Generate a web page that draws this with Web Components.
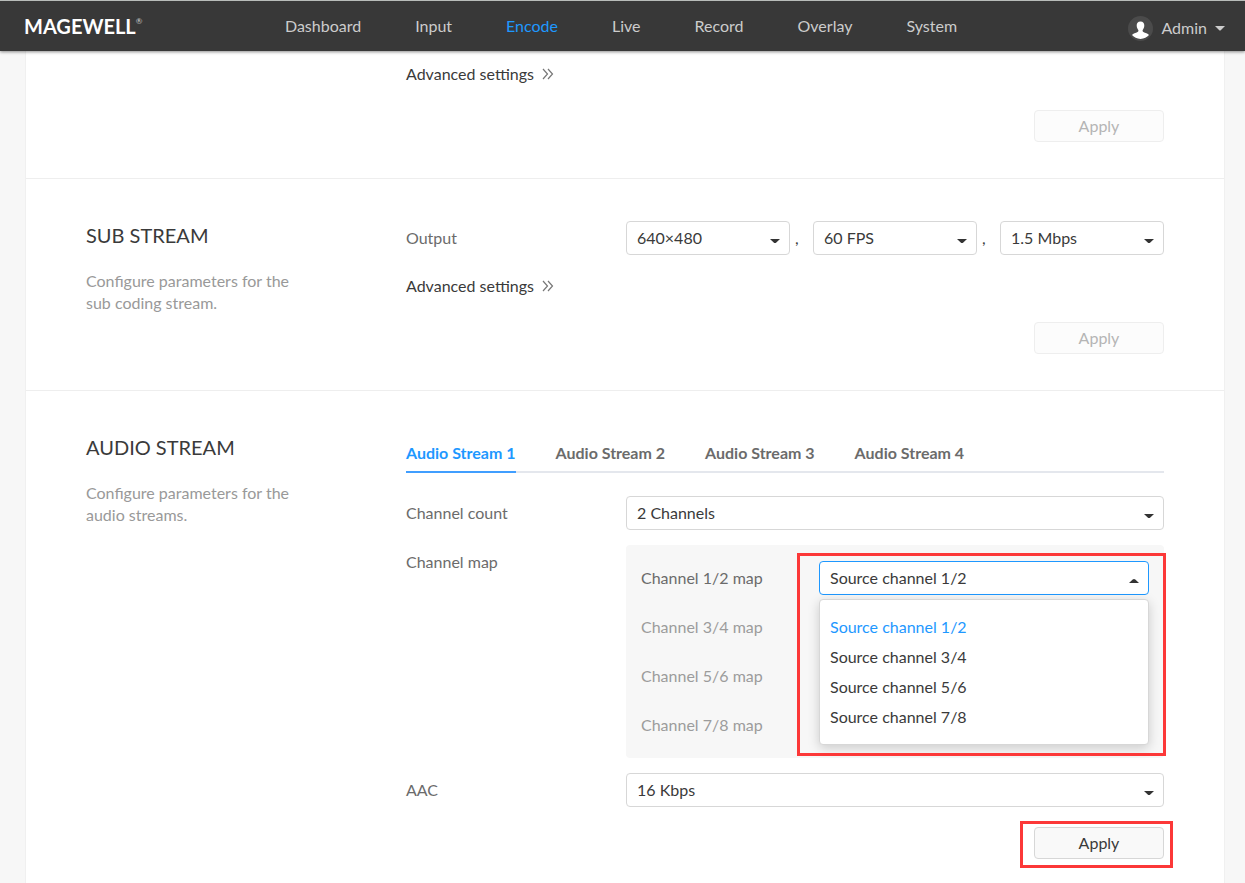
<!DOCTYPE html>
<html lang="en">
<head>
<meta charset="utf-8">
<title>Magewell - Encode</title>
<style>
  body { margin: 0; background: #f7f7f7; font: 16px/22px Lato, Carlito, "Liberation Sans", sans-serif; color: #3a3a3a; }
</style>
</head>
<body>
<mw-app></mw-app>

<script>
const define = (name, html, setup) => {
  const template = document.createElement('template');
  template.innerHTML = html;
  customElements.define(name, class extends HTMLElement {
    constructor() {
      super();
      this.attachShadow({ mode: 'open' }).append(template.content.cloneNode(true));
    }
    connectedCallback() {
      if (setup && !this.ready) { this.ready = true; setup(this, this.shadowRoot); }
    }
  });
};

define('mw-header', `
<style>
  :host { display: grid; grid-template-columns: 1fr auto 1fr; align-items: center; box-sizing: border-box; height: 51px; padding: 0 20px 0 17px;
    background: #383838; border-top: 1px solid #b8bcb9; box-shadow: 0 1px 3px rgba(0,0,0,.45); color: #ccc; position: sticky; top: 0; z-index: 5; }
  a { color: inherit; text-decoration: none; }
  .logo { justify-self: start; margin-left: 7px; display: flex; color: #fff; font: 700 20px/22px Lato, sans-serif; }
  sup { font: 400 8px/12px Lato, sans-serif; color: #ccc; }
  nav { display: flex; gap: 54px; }
  nav a[aria-current] { color: #1e98ff; }
  button { justify-self: end; display: flex; align-items: center; padding: 4px 0 0; border: 0; background: none; color: inherit; font: inherit; }
  .name, .caret { margin-left: 8px; }
</style>
<a class="logo" href="#" aria-label="Magewell home">MAGEWELL<sup>®</sup></a>
<nav>
  <a href="#">Dashboard</a><a href="#">Input</a><a href="#" aria-current="page">Encode</a><a href="#">Live</a>
  <a href="#">Record</a><a href="#">Overlay</a><a href="#">System</a>
</nav>
<button type="button">
  <svg width="25" height="25" viewBox="0 0 25 25"><circle cx="12.500" cy="12.500" r="12.500" fill="#4b4b4b"/>
    <path fill="#fff" d="M12.500 5.500C9.800 5.500 8.600 7.400 8.700 9.700C8.800 11.700 9.700 13.100 10.300 14C10.800 15.200 10 15.900 8.700 16.400C6.800 17.100 4.800 17.600 4 19.100C6 21.500 9 22.900 12.500 22.900S19 21.500 21 19.100C20.200 17.600 18.200 17.100 16.300 16.400C15 15.900 14.200 15.200 14.700 14C15.300 13.100 16.200 11.700 16.300 9.700C16.400 7.400 15.200 5.500 12.500 5.500Z"/></svg>
  <span class="name">Admin</span>
  <svg class="caret" width="10" height="5" viewBox="0 0 10 5"><path d="M0 0H10L6 4Q5 5 4 4Z" fill="#ccc"/></svg>
</button>`);

define('mw-section', `
<style>
  :host { display: grid; grid-template-columns: 320px minmax(0, 1fr); padding: 42px 60px 36px; border-bottom: 1px solid #eee; }
  :host([compact]) { padding-top: 7px; }
  :host([last]) { padding-bottom: 24px; border-bottom: 0; }
  h2 { margin: 0; font-size: 20px; line-height: 28px; font-weight: 400; }
  p { margin: 21px 0 0; max-width: 220px; color: #999; }
</style>
<div class="intro"></div>
<div><slot></slot></div>`, (el, root) => {
  if (!el.hasAttribute('heading')) return;
  const h = document.createElement('h2');
  h.textContent = el.getAttribute('heading');
  const p = document.createElement('p');
  p.textContent = el.getAttribute('text');
  root.querySelector('.intro').append(h, p);
});

define('mw-row', `
<style>
  :host { display: grid; grid-template-columns: var(--label, 220px) minmax(0, 1fr); margin-bottom: 15px; min-height: 34px; }
  :host([muted]) { --tone: #9c9c9c; }
  :host(:last-child) { margin-bottom: 0; }
  span { line-height: 34px; color: var(--tone, #6b6b6b); }
</style>
<span id="label"></span>
<div role="group" aria-labelledby="label"><slot></slot></div>`, (el, root) => {
  root.querySelector('span').textContent = el.getAttribute('label');
});

define('mw-select', `
<style>
  :host { display: grid; grid-template-columns: minmax(0, 1fr); }
  :host([label]) { grid-template-columns: var(--label, 220px) minmax(0, 1fr); margin-bottom: 15px; }
  label { line-height: 34px; color: #6b6b6b; }
  .box { position: relative; height: 34px; }
  select { appearance: none; box-sizing: border-box; display: block; width: 100%; height: 34px; padding: 0 30px 0 10px;
    border: 1px solid #d7d7d7; border-radius: 4px; background: #fff; color: #3a3a3a; font: inherit; outline: 0; }
  .caret { position: absolute; right: 10px; top: 18px; pointer-events: none; }
  :host([open]) select { border-color: #1e98ff; }
  :host([open]) .caret { transform: rotate(180deg); }
  ul { display: none; position: absolute; z-index: 2; top: 38px; left: 0; right: 0; margin: 0; padding: 12px 0; list-style: none;
    background: #fff; border: 1px solid #d7d7d7; border-radius: 4px; box-shadow: 0 3px 12px rgba(0,0,0,.18); }
  :host([open]) ul { display: block; }
  li { padding: 0 10px; line-height: 30px; }
  li[aria-selected="true"] { color: #1e98ff; }
</style>
<div class="box">
  <select id="control"></select>
  <svg class="caret" width="10" height="4" viewBox="0 0 10 4"><path d="M0 0H10L6.300 3.500Q5 4.500 3.700 3.500Z" fill="#333"/></svg>
  <ul role="listbox"></ul>
  <slot></slot>
</div>`, (el, root) => {
  const select = root.querySelector('select');
  const list = root.querySelector('ul');
  if (el.hasAttribute('label')) {
    const label = document.createElement('label');
    label.htmlFor = 'control';
    label.textContent = el.getAttribute('label');
    root.insertBefore(label, root.querySelector('.box'));
  } else select.setAttribute('aria-label', el.getAttribute('name'));
  select.add(new Option(el.getAttribute('value')));
  (el.getAttribute('options') || '').split('|').filter(Boolean).forEach(text => {
    const li = document.createElement('li');
    li.setAttribute('role', 'option');
    li.setAttribute('aria-selected', text === el.getAttribute('value'));
    li.textContent = text;
    list.append(li);
  });
});

define('mw-more', `
<style>
  :host { display: flex; height: 32px; align-items: center; margin-bottom: 20px; }
  a { display: flex; align-items: center; gap: 8px; color: #3a3a3a; text-decoration: none; }
</style>
<a href="#">Advanced settings
  <svg width="12" height="12" viewBox="0 0 12 12" fill="none" stroke="#777" stroke-width="1.200"><path d="M1 1L5.500 6L1 11M6 1L10.500 6L6 11"/></svg></a>`);

define('mw-button', `
<style>
  :host { display: block; position: relative; width: 130px; margin: 0 0 0 auto; }
  button { box-sizing: border-box; display: block; width: 100%; height: 32px; padding: 0; border: 1px solid #d7d7d7; border-radius: 4px; background: #f9f9f9; color: #3a3a3a; font: inherit; }
  button:disabled { border-color: #eee; background: #fcfcfc; color: #b5b5b5; }
</style>
<button type="button">Apply</button><slot></slot>`, (el, root) => {
  root.querySelector('button').disabled = el.hasAttribute('disabled');
});

define('mw-tabs', `
<style>
  :host { display: flex; gap: 40px; box-sizing: border-box; height: 40px; margin-bottom: 23px; box-shadow: inset 0 -2px #e4e7ed; }
  button { padding: 0; border: 0; background: none; color: #6b6b6b; font: inherit; font-weight: 700; }
  button[aria-selected="true"] { color: #1e98ff; box-shadow: inset 0 -2px #409eff; }
</style>
<button role="tab" aria-selected="true">Audio Stream 1</button>
<button role="tab">Audio Stream 2</button>
<button role="tab">Audio Stream 3</button>
<button role="tab">Audio Stream 4</button>`, el => el.setAttribute('role', 'tablist'));

define('mw-highlight', `
<style>
  :host { display: block; position: absolute; z-index: 3; box-sizing: border-box; border: 3px solid #fc3838; pointer-events: none; inset: -6px -9px -9px -14px; }
  :host([menu]) { inset: -8px -17px -161px -22px; }
</style>`);

define('mw-app', `
<style>
  :host { display: block; }
  main { margin: 0 20px 0 25px; border: solid #f0f0f0; border-width: 0 1px; background: #fff; min-height: calc(100vh - 51px); }
  .trio { display: flex; }
  .trio mw-select { flex: 1; }
  .trio span { width: 23px; box-sizing: border-box; padding-left: 5px; line-height: 34px; }
  .panel { --label: 178px; padding: 16px 15px; background: #f7f7f7; border-radius: 4px; }
</style>
<mw-header></mw-header>
<main>
  <mw-section compact>
    <mw-more></mw-more>
    <mw-button disabled></mw-button>
  </mw-section>
  <mw-section heading="SUB STREAM" text="Configure parameters for the sub coding stream.">
    <mw-row label="Output">
      <div class="trio">
        <mw-select name="Resolution" value="640×480"></mw-select><span>,</span>
        <mw-select name="Frame rate" value="60 FPS"></mw-select><span>,</span>
        <mw-select name="Bit rate" value="1.5 Mbps"></mw-select>
      </div>
    </mw-row>
    <mw-more></mw-more>
    <mw-button disabled></mw-button>
  </mw-section>
  <mw-section last heading="AUDIO STREAM" text="Configure parameters for the audio streams.">
    <mw-tabs></mw-tabs>
    <mw-select label="Channel count" value="2 Channels"></mw-select>
    <mw-row label="Channel map">
      <div class="panel">
        <mw-select label="Channel 1/2 map" value="Source channel 1/2" open
          options="Source channel 1/2|Source channel 3/4|Source channel 5/6|Source channel 7/8"><mw-highlight menu></mw-highlight></mw-select>
        <mw-row muted label="Channel 3/4 map"></mw-row>
        <mw-row muted label="Channel 5/6 map"></mw-row>
        <mw-row muted label="Channel 7/8 map"></mw-row>
      </div>
    </mw-row>
    <mw-select label="AAC" value="16 Kbps" style="margin-bottom: 20px"></mw-select>
    <mw-button><mw-highlight></mw-highlight></mw-button>
  </mw-section>
</main>`);
</script>
</body>
</html>
